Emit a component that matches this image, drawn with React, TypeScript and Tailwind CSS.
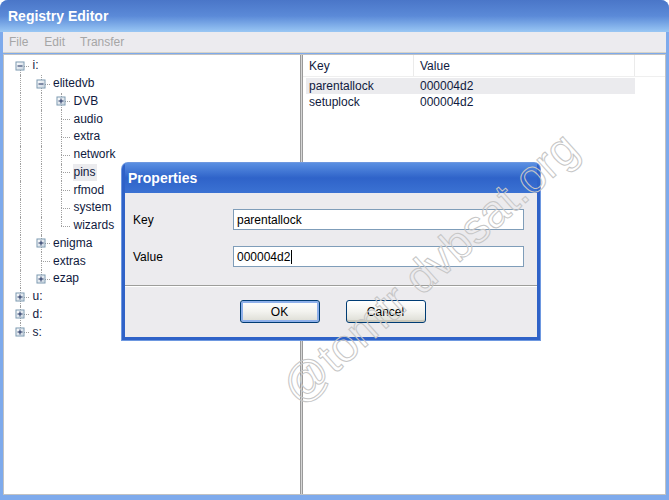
import React from "react";

type Node = {
  label: string;
  depth: number;
  box?: "plus" | "minus";
  guides: boolean[];
  up: boolean;
  down: boolean;
  selected?: boolean;
};

const tree: Node[] = [
  { label: "i:", depth: 0, box: "minus", guides: [], up: false, down: true },
  { label: "elitedvb", depth: 1, box: "minus", guides: [true], up: true, down: true },
  { label: "DVB", depth: 2, box: "plus", guides: [true, true], up: true, down: true },
  { label: "audio", depth: 2, guides: [true, true], up: true, down: true },
  { label: "extra", depth: 2, guides: [true, true], up: true, down: true },
  { label: "network", depth: 2, guides: [true, true], up: true, down: true },
  { label: "pins", depth: 2, guides: [true, true], up: true, down: true, selected: true },
  { label: "rfmod", depth: 2, guides: [true, true], up: true, down: true },
  { label: "system", depth: 2, guides: [true, true], up: true, down: true },
  { label: "wizards", depth: 2, guides: [true, true], up: true, down: false },
  { label: "enigma", depth: 1, box: "plus", guides: [true], up: true, down: true },
  { label: "extras", depth: 1, guides: [true], up: true, down: true },
  { label: "ezap", depth: 1, box: "plus", guides: [true], up: true, down: false },
  { label: "u:", depth: 0, box: "plus", guides: [], up: true, down: true },
  { label: "d:", depth: 0, box: "plus", guides: [], up: true, down: true },
  { label: "s:", depth: 0, box: "plus", guides: [], up: true, down: false },
];

function ExpandBox({ kind }: { kind: "plus" | "minus" }) {
  return (
    <span className="absolute left-1/2 top-1/2 z-10 flex h-[9px] w-[9px] -translate-x-1/2 -translate-y-1/2 items-center justify-center border border-[#7a98af] bg-gradient-to-br from-white to-[#c6d2de]">
      <span className="absolute h-[1px] w-[5px] bg-[#1c2f5e]" />
      {kind === "plus" && <span className="absolute h-[5px] w-[1px] bg-[#1c2f5e]" />}
    </span>
  );
}

function TreeRow({ node }: { node: Node }) {
  return (
    <div className="flex h-[17.75px] items-center">
      {node.guides.map((g, i) => (
        <div key={i} className="relative h-full w-[20.5px] shrink-0">
          {g && <span className="absolute left-[10px] top-0 h-full border-l border-dotted border-[#a0a0a0]" />}
        </div>
      ))}
      <div className="relative h-full w-[20.5px] shrink-0">
        {node.up && <span className="absolute left-[10px] top-0 h-1/2 border-l border-dotted border-[#a0a0a0]" />}
        {node.down && <span className="absolute left-[10px] top-1/2 h-1/2 border-l border-dotted border-[#a0a0a0]" />}
        <span className="absolute left-[10px] top-1/2 w-[9px] border-t border-dotted border-[#a0a0a0]" />
        {node.box && <ExpandBox kind={node.box} />}
      </div>
      <span
        className={`ml-[1px] px-[1px] leading-[17px] text-[12px] text-[#101a40] ${
          node.selected ? "bg-[#ebebee]" : ""
        }`}
      >
        {node.label}
      </span>
    </div>
  );
}

function XpButton({ label, isDefault }: { label: string; isDefault?: boolean }) {
  return (
    <button
      type="button"
      className={`flex h-[23px] w-[80px] items-center justify-center rounded-[3px] border border-[#003c74] bg-gradient-to-b from-white via-[#f3f3ef] to-[#dcdcd4] text-[12px] text-black ${
        isDefault ? "shadow-[inset_0_0_0_2px_#8eb0ea]" : "shadow-[inset_0_-2px_0_#c9c7ba]"
      }`}
    >
      {label}
    </button>
  );
}

export default function App() {
  return (
    <div className="relative flex h-[500px] w-[669px] flex-col overflow-hidden rounded-t-[8px] bg-[#7eaaec] font-['Liberation_Sans',Arial,sans-serif]">
      {/* title bar */}
      <div className="flex h-[32px] shrink-0 items-center bg-gradient-to-b from-[#4a76c8] via-[#5b8ad8] to-[#9ac7f4] px-[8px] text-[14px] font-bold text-white">
        Registry Editor
      </div>

      <div className="mx-[3px] mb-[5px] flex flex-1 flex-col">
        {/* menu */}
        <div className="flex h-[21px] shrink-0 items-center border-b border-[#d6d3c8] bg-[#ecebef] pl-[6px] text-[12px] text-[#a6a6a6]">
          <span>File</span>
          <span className="ml-[16px]">Edit</span>
          <span className="ml-[15px]">Transfer</span>
        </div>

        <div className="mt-[1px] flex flex-1 border border-[#c2c2c2] bg-white">
          {/* tree */}
          <div className="w-[296px] shrink-0 pl-[6px] pt-[2px]">
            {tree.map((n) => (
              <TreeRow key={n.label} node={n} />
            ))}
          </div>

          <div className="w-[3px] shrink-0 border-x border-[#9a9a9a] bg-[#d6d6d6]" />

          {/* list */}
          <div className="flex-1">
            <div className="flex h-[22px] items-center border-b border-[#efefef] text-[12px] text-[#101a40]">
              <div className="h-full w-[111px] border-r border-[#ebebeb] pl-[6px] leading-[22px]">Key</div>
              <div className="h-full w-[221px] border-r border-[#ebebeb] pl-[6px] leading-[22px]">Value</div>
            </div>
            <div className="mt-[1px] text-[12px] text-[#101a40]">
              <div className="ml-[3px] flex h-[16px] w-[329px] items-center bg-[#ebebee]">
                <span className="w-[111px] pl-[3px]">parentallock</span>
                <span className="pl-[3px]">000004d2</span>
              </div>
              <div className="ml-[3px] flex h-[16px] w-[329px] items-center">
                <span className="w-[111px] pl-[3px]">setuplock</span>
                <span className="pl-[3px]">000004d2</span>
              </div>
            </div>
          </div>
        </div>
      </div>

      {/* Properties dialog */}
      <div className="absolute left-[122px] top-[163px] flex h-[177px] w-[418px] flex-col rounded-t-[6px] bg-[#2f62c8] px-[3px] pb-[3px] shadow-[0_0_0_1px_#6e98e0]">
        <div className="flex h-[30px] shrink-0 items-center bg-gradient-to-b from-[#5a8fe2] via-[#2f63c9] to-[#3b72d3] px-[3px] text-[14px] font-bold text-white">
          Properties
        </div>
        <div className="flex flex-1 flex-col bg-[#ecebee] text-[12px] text-black">
          <div className="flex flex-col gap-[16px] pl-[8px] pt-[16px]">
            <div className="flex items-center">
              <span className="w-[100px]">Key</span>
              <div className="flex h-[21px] w-[291px] items-center border border-[#7f9db9] bg-white px-[3px]">
                parentallock
              </div>
            </div>
            <div className="flex items-center">
              <span className="w-[100px]">Value</span>
              <div className="flex h-[21px] w-[291px] items-center border border-[#7f9db9] bg-white px-[3px]">
                000004d2
                <span className="ml-[1px] h-[14px] w-[1px] bg-black" />
              </div>
            </div>
          </div>
          <div className="mt-[18px] border-t border-b border-t-[#9d9d9a] border-b-white" />
          <div className="mt-[13px] flex justify-center gap-[26px] pl-[3px]">
            <XpButton label="OK" isDefault />
            <XpButton label="Cancel" />
          </div>
        </div>
      </div>

      {/* watermark */}
      <div className="pointer-events-none absolute left-[430px] top-[268px] -translate-x-1/2 -translate-y-1/2 rotate-[-42deg] whitespace-nowrap font-['Liberation_Sans',Arial,sans-serif] text-[46px] text-transparent [-webkit-text-stroke:1px_#c6c6c6]">
        @tomtr dvbsat.org
      </div>
    </div>
  );
}
